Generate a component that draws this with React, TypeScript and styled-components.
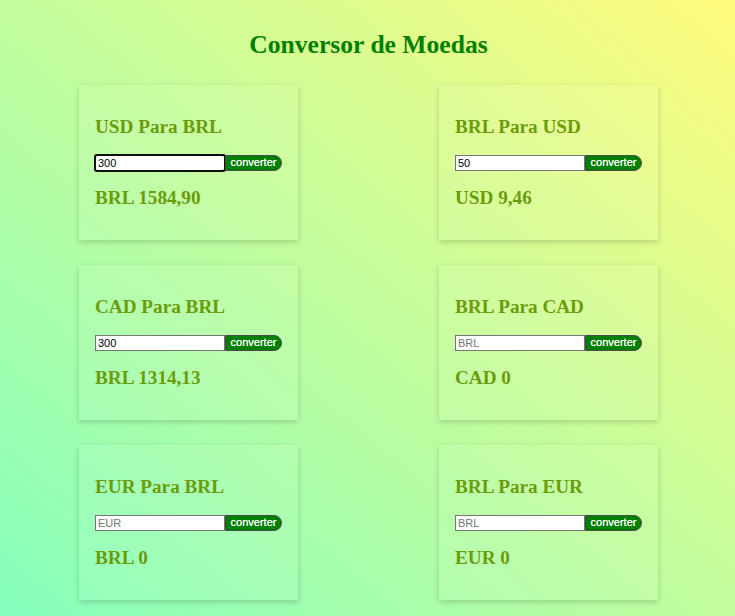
import React from "react";
import styled, { createGlobalStyle } from "styled-components";

const Global = createGlobalStyle`
  html, body { margin: 0; padding: 0; }
  body { font-family: "Liberation Serif", "Times New Roman", serif; }
`;

const Page = styled.div`
  min-height: 100vh;
  width: 100%;
  box-sizing: border-box;
  background: linear-gradient(to top right, #85ffbd 0%, #fffb7d 100%);
  padding-top: 30px;
  overflow: hidden;
`;

const Title = styled.h1`
  margin: 0 0 25px;
  text-align: center;
  font-size: 25.6px;
  line-height: 30px;
  font-weight: bold;
  color: #008000;
  padding-left: 2px;
`;

const Grid = styled.div`
  display: grid;
  grid-template-columns: 219px 219px;
  column-gap: 141px;
  row-gap: 25px;
  margin-left: 79px;
`;

const Card = styled.section`
  box-sizing: border-box;
  height: 155px;
  padding: 12px 16px 14px;
  background: rgba(255, 255, 255, 0.08);
  box-shadow: 0 2px 6px rgba(0, 0, 0, 0.18);
`;

const Heading = styled.h3`
  margin: 19px 0 18px;
  font-size: 19.2px;
  line-height: 21px;
  font-weight: bold;
  color: #6b9c0c;
`;

const Form = styled.div`
  display: flex;
  align-items: stretch;
  height: 16px;
  margin-bottom: 16px;
`;

const Input = styled.input<{ $focused?: boolean }>`
  box-sizing: border-box;
  width: 130px;
  height: 16px;
  margin: 0;
  padding: 0 2px;
  border: 1px solid #767676;
  border-radius: ${(p) => (p.$focused ? "2px" : "0")};
  background: #fff;
  font-family: "Liberation Sans", Arial, sans-serif;
  font-size: 11px;
  color: #000;
  outline: ${(p) => (p.$focused ? "2px solid #101010" : "none")};
  outline-offset: -1px;
  &::placeholder { color: #757575; }
`;

const Button = styled.button`
  box-sizing: border-box;
  width: 57px;
  height: 16px;
  margin: 0;
  padding: 0 0 1px;
  border: 1px solid #4a4a4a;
  border-radius: 0 8px 8px 0;
  background: #008000;
  color: #fff;
  font-family: "Liberation Sans", Arial, sans-serif;
  font-size: 11px;
  font-weight: normal;
  line-height: 13px;
  text-shadow: 0 0 0.4px #fff;
  cursor: pointer;
`;

const Result = styled.h3`
  margin: 0;
  font-size: 19.2px;
  line-height: 21px;
  font-weight: bold;
  color: #6b9c0c;
`;

type Conv = {
  title: string;
  value?: string;
  placeholder?: string;
  result: string;
  focused?: boolean;
};

const items: Conv[] = [
  { title: "USD Para BRL", value: "300", result: "BRL 1584,90", focused: true },
  { title: "BRL Para USD", value: "50", result: "USD 9,46" },
  { title: "CAD Para BRL", value: "300", result: "BRL 1314,13" },
  { title: "BRL Para CAD", placeholder: "BRL", result: "CAD 0" },
  { title: "EUR Para BRL", placeholder: "EUR", result: "BRL 0" },
  { title: "BRL Para EUR", placeholder: "BRL", result: "EUR 0" },
];

export default function App() {
  return (
    <>
      <Global />
      <Page>
        <Title>Conversor de Moedas</Title>
        <Grid>
          {items.map((it) => (
            <Card key={it.title}>
              <Heading>{it.title}</Heading>
              <Form>
                <Input
                  $focused={it.focused}
                  defaultValue={it.value}
                  placeholder={it.placeholder}
                />
                <Button type="button">converter</Button>
              </Form>
              <Result>{it.result}</Result>
            </Card>
          ))}
        </Grid>
      </Page>
    </>
  );
}
